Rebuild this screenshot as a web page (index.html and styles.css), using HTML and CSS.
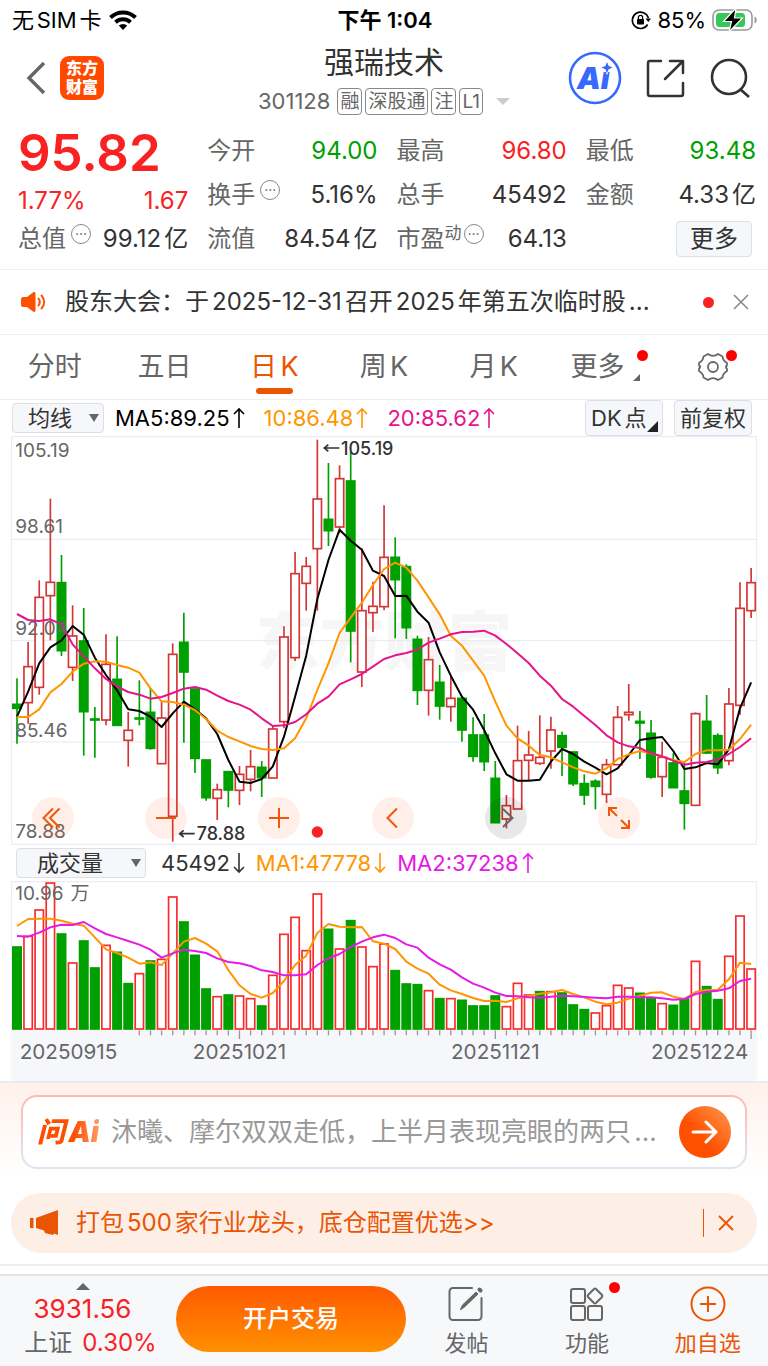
FILE: index.html
```html
<!DOCTYPE html>
<html lang="zh-CN">
<head>
  <meta charset="UTF-8" />
  <meta name="viewport" content="width=device-width, initial-scale=1.0"/>
  <title>强瑞技术 301128</title>
  <link rel="stylesheet" href="styles.css">
</head>
<body>

  <div class="status-bar">
    <div class="status-left">
      <span>无SIM卡</span>
      <svg width="28" height="20" viewBox="0 0 28 20" fill="none" stroke="#000" stroke-width="4">
        <path d="M1.5 7.5a18 18 0 0 1 25 0"/>
        <path d="M6.5 12.3a11 11 0 0 1 15 0"/>
        <path d="M14 20l-4.2-4.4a6 6 0 0 1 8.4 0z" fill="#000" stroke="none"/>
      </svg>
    </div>
    <div class="status-time">下午 1:04</div>
    <div class="status-right">
      <svg width="20" height="20" viewBox="0 0 20 20" fill="none" stroke="#000" stroke-width="1.6">
        <path d="M16.6 14.5A8.2 8.2 0 1 1 17.4 8"/>
        <path d="M14.5 8.5h5.5l-2.7 3.6z" fill="#000" stroke="none"/>
        <rect x="6" y="9" width="7" height="5.5" rx="1" fill="#000" stroke="none"/>
        <path d="M7.4 9.5V7.4a2.1 2.1 0 0 1 4.2 0v2.1" stroke-width="1.3"/>
      </svg>
      <span>85%</span>
      <svg width="46" height="24" viewBox="0 0 46 24">
        <rect x="1" y="2" width="39" height="20" rx="6" fill="none" stroke="#999" stroke-width="1.6"/>
        <rect x="4" y="5" width="29" height="14" rx="3.5" fill="#34c759"/>
        <path d="M42.5 8.5c3 1 3 6 0 7z" fill="#999"/>
        <path d="M24 0L11.5 13.5h8L17 24 30.5 10h-8z" fill="#000" stroke="#fff" stroke-width="1.2"/>
      </svg>
    </div>
  </div>

  <header class="header">
    <div class="header-left">
      <button class="icon-btn" aria-label="返回">
        <svg width="20" height="34" viewBox="0 0 20 34" fill="none" stroke="#666" stroke-width="3.4"><path d="M18 2L3 17l15 15"/></svg>
      </button>
      <div class="app-logo"><span>东方</span><span>财富</span></div>
    </div>
    <div class="header-title">
      <h1>强瑞技术</h1>
      <div class="stock-meta">
        <span class="stock-code">301128</span>
        <span class="tag">融</span>
        <span class="tag">深股通</span>
        <span class="tag">注</span>
        <span class="tag">L1</span>
        <i class="caret"></i>
      </div>
    </div>
    <div class="header-right">
      <button class="icon-btn" aria-label="AI">
        <svg width="54" height="54" viewBox="0 0 54 54">
          <circle cx="27" cy="27" r="25" fill="#fff" stroke="#3769ff" stroke-width="2.6"/>
          <text class="ai-text" x="9" y="38">Ai</text>
          <path d="M39 11l1.6 4 4 1.6-4 1.6-1.6 4-1.6-4-4-1.6 4-1.6z" fill="#3769ff" stroke="#fff" stroke-width="1.6" paint-order="stroke"/>
        </svg>
      </button>
      <button class="icon-btn" aria-label="分享">
        <svg width="40" height="40" viewBox="0 0 40 40" fill="none" stroke="#333" stroke-width="2.5" stroke-linecap="round" stroke-linejoin="round">
          <path d="M15 3H4a2 2 0 0 0-2 2v31a2 2 0 0 0 2 2h31a2 2 0 0 0 2-2V25"/>
          <path d="M24 3h13v12M37 3L19 21"/>
        </svg>
      </button>
      <button class="icon-btn" aria-label="搜索">
        <svg width="40" height="40" viewBox="0 0 40 40" fill="none" stroke="#333" stroke-width="2.6"><circle cx="19" cy="19" r="17"/><path d="M30 31l9 8"/></svg>
      </button>
    </div>
  </header>

  <section class="quote">
    <div class="quote-price">
      <div class="price">95.82</div>
      <div class="change"><span>1.77%</span><span>1.67</span></div>
    </div>
    <div class="cell"><span>今开</span><b class="down">94.00</b></div>
    <div class="cell"><span>最高</span><b class="up">96.80</b></div>
    <div class="cell"><span>最低</span><b class="down">93.48</b></div>
    <div class="cell"><span>换手<i class="info">···</i></span><b>5.16%</b></div>
    <div class="cell"><span>总手</span><b>45492</b></div>
    <div class="cell"><span>金额</span><b>4.33亿</b></div>
    <div class="cell"><span>总值<i class="info">···</i></span><b>99.12亿</b></div>
    <div class="cell"><span>流值</span><b>84.54亿</b></div>
    <div class="cell"><span>市盈<sup>动</sup><i class="info info-tight">···</i></span><b>64.13</b></div>
    <div class="cell cell-more"><button class="more-btn">更多</button></div>
  </section>

  <section class="news">
    <svg width="25" height="20" viewBox="0 0 25 20" fill="none" stroke="#ff5000" stroke-width="2" stroke-linecap="round">
      <path d="M2 5h4l6-4.5c1.5-1 2.5 0 2.5 1v17c0 1-1 2-2.5 1L6 15H2c-1 0-2-1-2-2V7c0-1 1-2 2-2z" fill="#ff5000" stroke="none"/>
      <path d="M17.5 6.5c1.5 2 1.5 5 0 7M20.5 3.5c3.5 4 3.5 9 0 13"/>
    </svg>
    <a class="news-text" href="#">股东大会：于2025-12-31召开2025年第五次临时股...</a>
    <i class="dot"></i>
    <button class="icon-btn" aria-label="关闭">
      <svg width="16" height="16" viewBox="0 0 16 16" stroke="#888" stroke-width="1.5"><path d="M1 1l14 14M15 1L1 15"/></svg>
    </button>
  </section>

  <nav class="tabs">
    <button class="tab">分时</button>
    <button class="tab">五日</button>
    <button class="tab active">日K</button>
    <button class="tab">周K</button>
    <button class="tab">月K</button>
    <button class="tab tab-more"><span class="badge-box corner">更多<i class="dot dot-more"></i></span></button>
    <button class="tab" aria-label="设置">
      <span class="badge-box">
        <svg width="32" height="30" viewBox="0 0 32 30" fill="none" stroke="#666" stroke-width="1.8" stroke-linejoin="round">
          <path d="M11 2c2 1.5 3 1.8 5 1.8S19 3.5 21 2l4.5 2.5c.2 3 1 4.5 4.5 6.5v2c-1.5 1.500-1.500 2.500 0 4v2c-3.500 2-4.300 3.500-4.500 6.500L21 28c-2-1.500-3-1.800-5-1.800s-3 .3-5 1.800l-4.500-2.500C6.300 22.500 5.500 21 2 19v-2c1.500-1.500 1.500-2.500 0-4v-2c3.500-2 4.300-3.500 4.500-6.500z"/>
          <circle cx="16" cy="15" r="5"/>
        </svg>
        <i class="dot dot-gear"></i>
      </span>
    </button>
  </nav>

  <div class="toolbar">
    <div class="select-box">
      <select class="select-line" aria-label="指标"><option>均线</option></select>
    </div>
    <span class="ma ma5">MA5:89.25<svg class="arrow" viewBox="0 0 12 22"><path d="M6 21V2M1 7l5-5 5 5"/></svg></span>
    <span class="ma ma10">10:86.48<svg class="arrow" viewBox="0 0 12 22"><path d="M6 21V2M1 7l5-5 5 5"/></svg></span>
    <span class="ma ma20">20:85.62<svg class="arrow" viewBox="0 0 12 22"><path d="M6 21V2M1 7l5-5 5 5"/></svg></span>
    <div class="toolbar-right">
      <button class="tool-btn corner">DK点</button>
      <button class="tool-btn">前复权</button>
    </div>
  </div>

  <div class="chart">
    <svg id="priceChart" viewBox="0 0 2238 1227"></svg>
    <div class="chart-controls">
      <button class="round-btn" aria-label="最左">
        <svg viewBox="0 0 42 42"><path d="M21 11.5L11.5 21l9.5 9.5M27.5 11.5L18 21l9.5 9.5"/></svg>
      </button>
      <button class="round-btn" aria-label="缩小">
        <svg viewBox="0 0 42 42"><path d="M11 21h20"/></svg>
      </button>
      <button class="round-btn" aria-label="放大">
        <svg viewBox="0 0 42 42"><path d="M11 21h20M21 11v20"/></svg>
      </button>
      <button class="round-btn" aria-label="左移">
        <svg viewBox="0 0 42 42"><path d="M25 11.5L15.5 21l9.5 9.5"/></svg>
      </button>
      <button class="round-btn disabled" aria-label="右移">
        <svg viewBox="0 0 42 42"><path d="M18 12l9.5 9-9.5 9"/></svg>
      </button>
      <button class="round-btn" aria-label="全屏">
        <svg viewBox="0 0 42 42"><path d="M11 19v-8h8M11 11l8 8M31 23v8h-8M31 31l-8-8"/></svg>
      </button>
    </div>
  </div>

  <div class="toolbar toolbar-vol">
    <div class="select-box">
      <select class="select-vol" aria-label="副图指标"><option>成交量</option></select>
    </div>
    <span class="ma vol">45492<svg class="arrow" viewBox="0 0 12 22"><path d="M6 1v19M1 15l5 5 5-5"/></svg></span>
    <span class="ma ma10">MA1:47778<svg class="arrow" viewBox="0 0 12 22"><path d="M6 1v19M1 15l5 5 5-5"/></svg></span>
    <span class="ma vol-ma2">MA2:37238<svg class="arrow" viewBox="0 0 12 22"><path d="M6 21V2M1 7l5-5 5 5"/></svg></span>
  </div>

  <div class="chart">
    <svg id="volumeChart" viewBox="0 0 2238 600"></svg>
  </div>

  <section class="ask">
    <div class="ask-box">
      <label class="ask-logo" for="askInput">问Ai</label>
      <input type="text" id="askInput" placeholder="沐曦、摩尔双双走低，上半月表现亮眼的两只..." />
      <button class="ask-btn" aria-label="发送">
        <svg width="28" height="24" viewBox="0 0 28 24" fill="none" stroke="#fff" stroke-width="3" stroke-linecap="round" stroke-linejoin="round"><path d="M2 12h23M15 2l10 10-10 10"/></svg>
      </button>
    </div>
  </section>

  <section class="promo">
    <svg width="29" height="26" viewBox="0 0 29 26" fill="#ea5504">
      <path d="M0 8h3.5v10H0zM6 8L28 0v25l-4-1.5-1 1.5-8-2-1-2.5L6 18z"/>
    </svg>
    <a class="promo-text" href="#">打包500家行业龙头，底仓配置优选&gt;&gt;</a>
    <button class="promo-close" aria-label="关闭">
      <svg width="16" height="16" viewBox="0 0 16 16" stroke="#ea5504" stroke-width="1.8"><path d="M1 1l14 14M15 1L1 15"/></svg>
    </button>
  </section>

  <footer class="bottom-bar">
    <div class="index">
      <i class="caret caret-up"></i>
      <div class="index-value">3931.56</div>
      <div class="index-row"><span>上证</span><span class="up">0.30%</span></div>
    </div>
    <button class="trade-btn">开户交易</button>
    <button class="nav-btn">
      <svg width="36" height="36" viewBox="0 0 36 36" fill="none" stroke="#666" stroke-width="2" stroke-linecap="round">
        <path d="M24 2H5a3.5 3.5 0 0 0-3.5 3.5v25A3.5 3.5 0 0 0 5 34h25a3.5 3.5 0 0 0 3.5-3.5V12"/>
        <path d="M12.5 23.5l2-4.5L28 6l2 2-13.5 13z" fill="#666" stroke-width="1"/>
        <path d="M31.5 3.5l1 1" stroke-width="4"/>
      </svg>
      <span>发帖</span>
    </button>
    <button class="nav-btn">
      <span class="badge-box">
        <svg width="36" height="36" viewBox="0 0 36 36" fill="none" stroke="#666" stroke-width="2">
          <rect x="2" y="3" width="14" height="14" rx="2"/>
          <rect x="2" y="20" width="14" height="14" rx="2"/>
          <rect x="19" y="20" width="14" height="14" rx="2"/>
          <path d="M25 3a1.5 1.5 0 0 1 2 0l6 6a1.5 1.5 0 0 1 0 2l-6 6a1.5 1.5 0 0 1-2 0l-6-6a1.5 1.5 0 0 1 0-2z"/>
        </svg>
        <i class="dot dot-nav"></i>
      </span>
      <span>功能</span>
    </button>
    <button class="nav-btn nav-add">
      <svg width="36" height="36" viewBox="0 0 36 36" fill="none" stroke="#ea5504" stroke-width="2"><circle cx="18" cy="18" r="16.5"/><path d="M10 18h16M18 10v16"/></svg>
      <span>加自选</span>
    </button>
  </footer>

  <script src="chart.js"></script>
</body>
</html>
```
FILE: styles.css
```css
* { box-sizing: border-box; }

body {
  margin: 0;
  font-family: Inter, 'Noto Sans CJK SC', sans-serif;
  font-size: 24px;
  line-height: 32px;
  color: #333;
  background: #fff;
  text-autospace: normal;
}

button,
select,
input {
  font: inherit;
  color: inherit;
  padding: 0;
  margin: 0;
  border: none;
  background: none;
  text-autospace: inherit;
}

button { cursor: pointer; }

a {
  color: inherit;
  text-decoration: none;
}

svg { display: block; }

.up { color: #f82222; }
.down { color: #00a000; }

.icon-btn { display: flex; }

.dot {
  width: 11px;
  height: 11px;
  border-radius: 50%;
  background: #f82222;
}

.badge-box {
  position: relative;
  display: inline-block;
}

.badge-box .dot {
  position: absolute;
  background: #f00;
}

.caret {
  border: 7px solid transparent;
  border-top-color: #ccc;
  border-bottom-width: 0;
}

/* status bar */
.status-bar {
  display: grid;
  grid-template-columns: 1fr auto 1fr;
  height: 40px;
  padding: 0 10px 0 12px;
  align-items: center;
  font-size: 22px;
  color: #000;
}

.status-left,
.status-right {
  display: flex;
  align-items: center;
  gap: 8px;
}

.status-right {
  justify-content: flex-end;
  gap: 6px;
}

.status-time { font-weight: 600; }

/* header */
.header {
  display: grid;
  grid-template-columns: 1fr auto 1fr;
  height: 88px;
  padding: 0 18px;
}

.header-left {
  display: flex;
  gap: 14px;
  height: 76px;
  padding-left: 8px;
  align-items: center;
}

.app-logo {
  display: flex;
  flex-direction: column;
  align-items: center;
  justify-content: center;
  width: 44px;
  height: 44px;
  border-radius: 9px;
  background: #ff4800;
  color: #fff;
  font-size: 16px;
  line-height: 19px;
  font-weight: 900;
}

.header-title {
  display: flex;
  flex-direction: column;
  align-items: center;
}

.header-title h1 {
  margin: 0;
  font-size: 30px;
  line-height: 44px;
  font-weight: 400;
}

.stock-meta {
  display: flex;
  align-items: center;
  gap: 3px;
  height: 34px;
  color: #666;
}

.stock-code {
  font-size: 22px;
  margin-right: 4px;
}

.tag {
  padding: 0 2px;
  border: 1px solid #888;
  border-radius: 4px;
  font-size: 19px;
  line-height: 25px;
}

.stock-meta .caret { margin-left: 10px; }

.header-right {
  display: flex;
  justify-content: flex-end;
  align-items: center;
  gap: 24px;
  height: 76px;
}

.ai-text {
  font-size: 30px;
  font-weight: 900;
  font-style: italic;
  fill: #3769ff;
}

/* quote */
.quote {
  display: grid;
  grid-template-columns: repeat(4, 1fr);
  grid-template-rows: repeat(3, 44px);
  column-gap: 19px;
  padding: 1px 12px 8px 18px;
  border-bottom: 1px solid #eee;
}

.quote-price {
  grid-row: span 2;
  color: #f82222;
}

.price {
  font-size: 51px;
  line-height: 48px;
  font-weight: 600;
}

.change {
  display: flex;
  justify-content: space-between;
  line-height: 48px;
}

.cell {
  display: flex;
  justify-content: space-between;
  align-items: center;
  white-space: nowrap;
}

.cell span {
  display: flex;
  align-items: center;
  color: #666;
}

.cell b { font-weight: 400; }

.cell sup {
  font-size: 17px;
  line-height: 20px;
  margin-bottom: 12px;
}

.info {
  width: 20px;
  height: 20px;
  margin: 0 0 10px 5px;
  border: 1px solid #888;
  border-radius: 50%;
  font-size: 14px;
  line-height: 18px;
  font-style: normal;
  text-align: center;
}

.info-tight { margin-left: 2px; }

.cell .more-btn {
  width: 76px;
  height: 36px;
  margin-right: 4px;
  border: 1px solid #dcdfe4;
  border-radius: 4px;
  background: #f5f7fa;
}

.cell-more { justify-content: flex-end; }

/* news */
.news {
  display: flex;
  align-items: center;
  height: 65px;
  padding: 0 19px 0 21px;
  border-bottom: 1px solid #eee;
}

.news-text {
  flex: 1;
  margin-left: 19px;
  white-space: nowrap;
}

.news .dot { margin-right: 19px; }

/* tabs */
.tabs {
  display: grid;
  grid-template-columns: repeat(7, 1fr);
  height: 65px;
  border-bottom: 1px solid #eee;
}

.tab {
  display: flex;
  flex-direction: column;
  align-items: center;
  justify-content: center;
  font-size: 27px;
  color: #666;
}

.tab-more { padding-right: 12px; }

.tab.active {
  position: relative;
  color: #ea5504;
}

.tab.active::after {
  content: "";
  position: absolute;
  bottom: 5px;
  width: 37px;
  height: 6px;
  border-radius: 3px;
  background: #ea5504;
}

.corner { position: relative; }

.corner::after {
  content: "";
  position: absolute;
  right: 4px;
  bottom: 3px;
  border-left: 11px solid transparent;
  border-bottom: 11px solid #222;
}

.tab .corner::after {
  right: -16px;
  bottom: 2px;
  border-left-width: 7px;
  border-bottom: 7px solid #666;
}

.dot-more { top: -1px; right: -24px; }
.dot-gear { top: -2px; right: -8px; }
.dot-nav { top: -4px; right: -15px; }

/* chart toolbars */
.toolbar {
  display: flex;
  align-items: center;
  height: 36px;
  padding: 0 16px 0 12px;
  font-size: 22px;
  white-space: nowrap;
}

.toolbar-vol { padding-left: 16px; }

.select-box {
  position: relative;
  display: flex;
}

.select-box::after {
  content: "";
  position: absolute;
  right: 5px;
  top: 11px;
  border: 5px solid transparent;
  border-top: 8px solid #666;
  border-bottom: none;
}

.select-line,
.select-vol {
  appearance: none;
  width: 92px;
  height: 30px;
  padding-left: 15px;
  border: 1px solid #dcdfe4;
  border-radius: 4px;
  background: #f5f7fa;
  line-height: 28px;
}

.select-vol {
  width: 130px;
  padding-left: 20px;
}

.ma {
  display: flex;
  align-items: center;
  gap: 3px;
}

.arrow {
  width: 12px;
  height: 22px;
  fill: none;
  stroke: currentColor;
  stroke-width: 1.6;
}

.ma5 { margin-left: 11px; color: #000; }
.ma10 { margin-left: 19px; color: #ff9500; }
.ma20 { margin-left: 19px; color: #e6148c; }
.vol { margin-left: 15px; }
.toolbar-vol .ma10,
.vol-ma2 { margin-left: 11px; }
.vol-ma2 { color: #e619e6; }

.toolbar-right {
  display: flex;
  gap: 11px;
  margin-left: auto;
}

.tool-btn {
  height: 36px;
  width: 78px;
  padding: 0 5px;
  border: 1px solid #dcdfe4;
  border-radius: 4px;
  background: #f5f7fa;
  text-align: left;
}

/* charts */
.chart {
  position: relative;
  margin: 0 11px;
}

.chart svg { width: 100%; }

.chart-controls {
  position: absolute;
  left: 21px;
  right: 117px;
  bottom: 6px;
  display: flex;
  justify-content: space-between;
}

.round-btn {
  width: 42px;
  height: 42px;
  border-radius: 50%;
  background: rgba(255, 100, 30, 0.1);
}

.round-btn svg {
  fill: none;
  stroke: #f0560a;
  stroke-width: 2;
}

.round-btn.disabled { background: rgba(0, 0, 0, 0.09); }
.round-btn.disabled svg { stroke: #666; }

.grid { fill: none; stroke: #e6e9f0; stroke-width: 3; }
.candle-up { fill: #fff; stroke: #d43535; stroke-width: 5; }
.candle-down { fill: #00a000; stroke: #00a000; stroke-width: 5; }
.vol-up { fill: #fff; stroke: #f82a2a; stroke-width: 5; }
.vol-down { fill: #00a000; stroke: #00a000; stroke-width: 5; }
.line { fill: none; stroke-width: 6; stroke-linejoin: round; }
.line-black { stroke: #000; }
.line-orange { stroke: #ff9500; }
.line-pink { stroke: #e6148c; }
.line-purple { stroke: #e619e6; }
.axis-label { font-size: 57px; fill: #666; }
.date-label { font-size: 62px; fill: #666; }
.mark { font-size: 54px; font-weight: 500; fill: #333; }
.mark-arrow { fill: none; stroke: #333; stroke-width: 5; }
.watermark { font-size: 192px; font-weight: 900; fill: #f6f6f6; }
.axis-bg { fill: #f6f7fa; }
.tick { stroke: #999; stroke-width: 4; }
.chart-dot { fill: #f82222; }

/* ask box */
.ask {
  padding: 12px 21px 24px;
  border-top: 2px solid #eceaec;
  background: linear-gradient(#fff1ec, #fff 85%);
}

.ask-box {
  display: flex;
  align-items: center;
  height: 74px;
  padding: 0 14px;
  border: 2px solid transparent;
  border-radius: 16px;
  background:
    linear-gradient(#fff, #fff) padding-box,
    linear-gradient(#ffb9aa, #dfe5f7) border-box;
}

.ask-logo {
  font-size: 28px;
  font-weight: 900;
  font-style: italic;
  background: linear-gradient(90deg, #ff4e00 60%, #ff9a66);
  background-clip: text;
  color: transparent;
}

.ask-box input {
  flex: 1;
  min-width: 0;
  margin-left: 12px;
  font-size: 26px;
  outline: none;
}

.ask-box input::placeholder {
  color: #999;
  opacity: 1;
}

.ask-btn {
  display: flex;
  align-items: center;
  justify-content: center;
  width: 52px;
  height: 52px;
  border-radius: 50%;
  background: linear-gradient(45deg, #ff5000 40%, #ff9a50);
}

/* promo */
.promo {
  display: flex;
  align-items: center;
  height: 60px;
  margin: 0 11px 11px;
  padding: 0 23px 0 19px;
  border-radius: 30px;
  background: #fdeee6;
  color: #ea5504;
}

.promo-text {
  flex: 1;
  margin-left: 17px;
}

.promo-close {
  display: flex;
  align-items: center;
  height: 28px;
  padding-left: 14px;
  border-left: 1px solid #ea5504;
}

/* bottom bar */
.bottom-bar {
  display: grid;
  grid-template-columns: 165px 2fr 1fr 1fr 1fr;
  height: 102px;
  padding-top: 8px;
  border-top: 2px solid #eee;
  background: linear-gradient(#fff 8px, #e4e6e9 8px, #e4e6e9 10px, #f6f8fa 10px);
}

.index {
  display: flex;
  flex-direction: column;
  align-items: center;
  padding-top: 9px;
}

.caret-up {
  border-top-width: 0;
  border-bottom: 7px solid #666;
}

.index-value {
  font-size: 26px;
  line-height: 38px;
  color: #f82222;
}

.index-row {
  display: flex;
  gap: 10px;
  padding-left: 16px;
  line-height: 30px;
  color: #666;
}

.trade-btn {
  height: 66px;
  margin: 12px 0 0 11px;
  border-radius: 33px;
  background: linear-gradient(#ff5a00, #ff9000);
  color: #fff;
  font-weight: 500;
}

.nav-btn {
  display: flex;
  flex-direction: column;
  align-items: center;
  gap: 5px;
  padding-top: 12px;
  font-size: 22px;
  color: #666;
}

.nav-add { color: #ea5504; }
```
FILE: chart.js
```js
// Both charts share the same x scale: one slot per trading day
const STEP = 33.37;
const FIRST = 18;
const BODY = 25;
const x = (i) => FIRST + i * STEP;

// [direction, high, body top, body bottom, low]
const candles = [
  ['d', 730, 808, 820, 926], ['u', 621, 695, 803, 866], ['u', 436, 487, 757, 779], ['u', 191, 442, 482, 616],
  ['d', 360, 443, 647, 663], ['u', 511, 603, 697, 738], ['d', 519, 618, 830, 962], ['d', 816, 852, 855, 968],
  ['u', 598, 688, 855, 871], ['d', 604, 733, 871, 871], ['u', 831, 886, 916, 995], ['d', 736, 849, 852, 871],
  ['d', 759, 832, 940, 944], ['u', 800, 849, 986, 986], ['u', 625, 658, 1144, 1220], ['d', 533, 622, 711, 923],
  ['d', 762, 762, 970, 1014], ['d', 975, 975, 1088, 1097], ['u', 1046, 1064, 1090, 1155], ['d', 1010, 1010, 1065, 1117],
  ['u', 993, 1018, 1066, 1110], ['u', 945, 995, 1033, 1069], ['d', 978, 997, 1028, 1086], ['u', 873, 882, 1029, 1029],
  ['u', 574, 606, 860, 880], ['u', 351, 416, 668, 678], ['u', 366, 394, 445, 527], ['u', 14, 192, 341, 527],
  ['d', 84, 253, 287, 333], ['u', 91, 131, 276, 295], ['d', 50, 138, 588, 682], ['u', 340, 527, 711, 756],
  ['u', 440, 514, 533, 591], ['u', 211, 367, 515, 526], ['d', 307, 367, 434, 610], ['d', 388, 395, 578, 612],
  ['d', 602, 613, 766, 810], ['u', 606, 674, 766, 842], ['d', 690, 742, 813, 854], ['u', 725, 790, 815, 860],
  ['d', 784, 790, 885, 920], ['d', 847, 900, 964, 980], ['d', 837, 900, 980, 1008], ['d', 978, 1030, 1163, 1163],
  ['u', 1080, 1112, 1152, 1180], ['u', 872, 977, 1122, 1122], ['u', 888, 960, 976, 1036], ['u', 841, 967, 985, 990],
  ['u', 845, 885, 948, 1001], ['d', 890, 902, 937, 1023], ['d', 951, 951, 1046, 1053], ['d', 1018, 1046, 1080, 1110],
  ['d', 1033, 1039, 1054, 1123], ['u', 972, 989, 1078, 1104], ['u', 813, 847, 989, 989], ['u', 747, 832, 839, 857],
  ['d', 828, 859, 864, 972], ['d', 855, 895, 1026, 1031], ['u', 920, 967, 1025, 1086], ['d', 955, 984, 1058, 1058],
  ['d', 980, 1068, 1105, 1184], ['u', 832, 836, 1111, 1111], ['d', 780, 859, 954, 957], ['d', 895, 902, 998, 1017],
  ['u', 759, 807, 977, 991], ['u', 442, 520, 811, 840], ['u', 399, 443, 527, 549]
];

const ma5 = [845, 770, 685, 637, 616, 573, 599, 668, 720, 766, 823, 828, 845, 876, 835, 800, 823, 850, 897, 975, 1040, 1044,
  1032, 994, 905, 785, 662, 492, 375, 284, 317, 344, 407, 423, 483, 482, 530, 563, 652, 722, 785, 824, 885, 955, 1018, 1037,
  1037, 1034, 980, 942, 957, 980, 998, 1018, 1000, 960, 915, 910, 906, 948, 1002, 997, 984, 988, 943, 820, 742];
const ma10 = [846, 846, 823, 772, 747, 710, 686, 679, 680, 690, 698, 713, 760, 799, 801, 809, 825, 852, 887, 906, 919, 933,
  942, 945, 940, 910, 850, 765, 685, 594, 548, 503, 450, 402, 383, 398, 437, 487, 538, 602, 632, 677, 722, 800, 872, 910,
  932, 960, 967, 982, 997, 1009, 1016, 1000, 972, 958, 948, 955, 965, 975, 981, 957, 946, 946, 944, 912, 869];
const ma20 = [537, 555, 558, 553, 568, 628, 664, 700, 732, 754, 771, 779, 791, 786, 774, 761, 756, 764, 782, 798, 809, 824,
  850, 873, 871, 861, 838, 806, 785, 748, 733, 717, 695, 672, 661, 654, 644, 623, 611, 598, 591, 590, 587, 602, 627, 655,
  684, 722, 752, 792, 815, 843, 870, 901, 922, 934, 939, 955, 964, 977, 989, 983, 981, 973, 957, 936, 910];

// direction + top of the bar
const volumes = ('d304 u272 u193 u112 d265 u352 d286 d367 u299 d320 d414 u384 d346 u341 u154 d229 d329 d430 u453 d448 ' +
  'u451 u459 d481 u389 u266 u215 u315 u145 d251 u310 d225 u304 u363 u295 d375 d415 d417 u435 d459 u459 d464 d481 d481 d451 ' +
  'u483 u413 u448 d438 u438 d442 d478 d492 u502 u480 u419 u427 d443 d457 u474 d479 d460 u347 d423 d462 u332 u211 u370').split(' ');
const volMa1 = [243, 222, 221, 221, 227, 236, 242, 277, 313, 324, 338, 356, 352, 360, 325, 290, 279, 296, 319, 375, 421, 447,
  458, 444, 408, 360, 332, 264, 237, 245, 247, 246, 289, 296, 312, 350, 371, 386, 419, 436, 447, 459, 468, 467, 471, 460,
  453, 446, 442, 435, 447, 457, 470, 478, 473, 461, 452, 443, 442, 455, 462, 441, 435, 434, 403, 353, 357];
const volMa2 = [273, 275, 263, 247, 239, 240, 231, 250, 267, 277, 288, 299, 314, 338, 325, 314, 318, 324, 340, 351, 355, 363,
  376, 381, 391, 391, 388, 360, 340, 327, 306, 290, 277, 269, 279, 298, 308, 338, 358, 374, 397, 416, 428, 443, 453, 454,
  457, 458, 455, 452, 454, 456, 458, 460, 455, 455, 457, 457, 460, 464, 462, 447, 440, 437, 430, 408, 401];

function line(values, offset, cls) {
  const points = values.map((v, i) => `${x(i).toFixed(1)},${v - offset}`).join(' ');
  return `<polyline class="line ${cls}" points="${points}"/>`;
}

function text(tx, ty, str, cls, anchor = 'start') {
  return `<text class="${cls}" x="${tx}" y="${ty}" text-anchor="${anchor}">${str}</text>`;
}

function drawPrice() {
  const top = 3;
  let out = '<rect class="grid" x="2" y="2" width="2234" height="1223"/>';
  out += text(1119, 686, '东方财富', 'watermark', 'middle');
  [310, 614, 918].forEach((y) => {
    out += `<path class="grid" d="M2 ${y}H2236"/>`;
  });

  candles.forEach(([dir, high, open, close, low], i) => {
    const cls = dir === 'u' ? 'candle-up' : 'candle-down';
    out += `<path class="${cls}" d="M${x(i)} ${high - top}V${low - top}"/>`;
    out += `<rect class="${cls}" x="${x(i) - BODY / 2}" y="${open - top}" width="${BODY}" height="${close - open}"/>`;
  });

  out += line(ma5, top, 'line-black') + line(ma10, top, 'line-orange') + line(ma20, top, 'line-pink');

  const labels = [[62, '105.19'], [290, '98.61'], [597, '92.04'], [902, '85.46'], [1207, '78.88']];
  labels.forEach(([y, str]) => {
    out += text(13, y, str, 'axis-label');
  });

  out += '<path class="mark-arrow" d="M940 36H985M952 26L940 36L952 46"/>' + text(990, 56, '105.19', 'mark');
  out += '<path class="mark-arrow" d="M506 1193H551M518 1183L506 1193L518 1203"/>' + text(557, 1211, '78.88', 'mark');
  out += '<circle class="chart-dot" cx="919" cy="1188" r="17"/>';
  document.getElementById('priceChart').innerHTML = out;
}

function drawVolume() {
  const top = 108;
  const base = 444;
  let out = '<rect class="axis-bg" x="1" y="446" width="2236" height="154"/>';
  out += '<path class="grid" d="M2 446V2H2236V446"/>';

  volumes.forEach((v, i) => {
    const y = Number(v.slice(1)) - top + 2;
    const cls = v[0] === 'u' ? 'vol-up' : 'vol-down';
    out += `<rect class="${cls}" x="${x(i) - BODY / 2}" y="${y}" width="${BODY}" height="${base - y}"/>`;
    if (i > 10) {
      const long = i === 20 || i === 43 || i === 66;
      out += `<path class="tick" d="M${x(i)} 448v${long ? 26 : 15}"/>`;
    }
  });

  out += line(volMa1, top, 'line-orange') + line(volMa2, top, 'line-purple');
  out += text(13, 56, '10.96万', 'axis-label');
  out += text(26, 534, '20250915', 'date-label');
  out += text(x(20), 534, '20251021', 'date-label', 'middle');
  out += text(x(43), 534, '20251121', 'date-label', 'middle');
  out += text(2212, 534, '20251224', 'date-label', 'end');
  document.getElementById('volumeChart').innerHTML = out;
}

drawPrice();
drawVolume();
```
